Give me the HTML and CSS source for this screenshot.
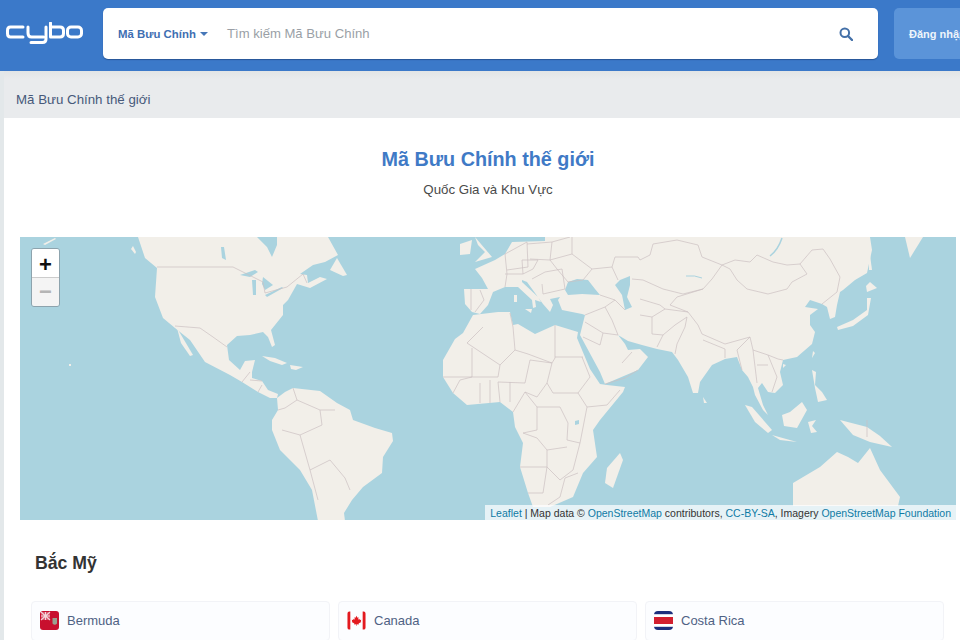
FILE: index.html
```html
<!DOCTYPE html>
<html lang="vi">
<head>
<meta charset="utf-8">
<title>Mã Bưu Chính thế giới</title>
<link rel="stylesheet" href="styles.css">
</head>
<body>
<header class="topbar">
  <a class="logo" href="#" aria-label="cybo">
    <svg width="78" height="24" viewBox="0 0 78 24" fill="none" stroke="#fff" stroke-width="3" stroke-linecap="round" stroke-linejoin="round">
      <path d="M18 5H5.500Q2.500 5 2.500 8.500V11.500Q2.500 15 5.500 15H18"/>
      <path d="M23 5V11Q23 15 26.500 15H38.500M41 5V17Q41 20.500 37.500 20.500H26"/>
      <path d="M45.500 1V15H55Q58.500 15 58.500 11.500V8.500Q58.500 5 55 5H45.500"/>
      <rect x="62.500" y="5" width="14" height="10" rx="3.500"/>
    </svg>
  </a>
  <form class="search">
    <span class="scope">Mã Bưu Chính<i class="caret"></i></span>
    <span class="placeholder">Tìm kiếm Mã Bưu Chính</span>
    <svg class="search-icon" width="14" height="14" viewBox="0 0 14 14" fill="none" stroke="#4470a8" stroke-width="2">
      <circle cx="5.800" cy="5.800" r="4.300"/>
      <path d="M9 9l4 4" stroke-width="2.400" stroke-linecap="round"/>
    </svg>
  </form>
  <a class="login" href="#">Đăng nhập</a>
</header>

<main class="page">
  <nav class="crumb">Mã Bưu Chính thế giới</nav>
  <div class="content">
    <h1 class="title">Mã Bưu Chính thế giới</h1>
    <p class="subtitle">Quốc Gia và Khu Vực</p>

    <section class="map">
      <svg class="map-art" viewBox="20 237 936 283" preserveAspectRatio="none" aria-hidden="true">
        <g fill="#f2efe9">
          <path d="M138 237L145 258L157 268L155 297L163 318L175 328L190 340L205 362L230 375L242 382L258 392L270 398L277 398L278 394L268 390L262 381L252 378L252 372L255 360L245 361L240 370L229 360L227 345L237 336L250 335L263 332L268 337L272 347L275 345L271 330L283 315L283 305L288 300L297 284L310 288L327 279L320 277L308 283L307 275L300 274L313 265L325 262L338 255L328 237Z"/>
          <path d="M337 258L347 275L343 276L330 270Z"/>
          <path d="M133 246L136 252L135 254L131 249Z"/>
          <path d="M177 328L193 355L190 356L181 343Z"/>
          <path d="M262 356L275 358L287 363L282 365L270 361Z"/>
          <path d="M290 365L303 367L296 370L291 369Z"/>
          <path d="M69 364L71 364L71 366L69 366Z"/>
          <path d="M43 244L55 238L56 239L45 245Z"/>
          <path d="M277 398L285 392L293 388L320 391L337 403L350 410L353 420L375 428L392 433L393 441L383 457L382 473L363 487L352 500L344 513L345 521L318 521L312 490L300 470L280 450L272 430L272 420L278 410Z"/>
          <path d="M473 315L498 312L510 312L513 325L518 324L535 334L555 325L578 332L577 338L590 369L600 384L607 385L625 387L623 392L600 420L593 430L597 457L583 473L573 497L550 507L533 507L528 493L520 467L523 443L515 427L513 412L500 402L467 405L453 393L443 377L443 360L455 339L463 333Z"/>
          <path d="M620 453L623 460L613 488L605 483L607 468Z"/>
          <path d="M512 242L545 241L545 237L870 237L872 250L867 273L855 280L843 290L840 292L837 305L835 317L830 319L827 307L822 304L810 300L805 307L818 309L810 315L810 325L815 332L812 344L797 357L783 360L780 372L783 385L775 393L768 392L762 383L758 388L763 405L768 415L763 410L755 395L753 387L748 377L742 370L737 357L725 359L712 365L700 382L698 393L693 393L688 377L678 360L672 352L657 349L642 345L628 341L618 335L625 344L628 350L640 349L648 357L638 370L605 384L600 372L580 335L585 315L582 314L562 310L558 300L560 297L550 299L553 305L550 312L543 304L527 282L522 280L522 282L538 297L541 302L535 300L536 307L533 308L532 300L518 287L513 287L505 287L493 292L488 305L480 314L472 312L465 304L464 289L488 289L482 278L475 269L495 260L505 254Z"/>
          <path d="M475 237L492 257L475 262L485 252L478 245Z"/>
          <path d="M460 244L472 240L470 254L460 255Z"/>
          <path d="M514 295L517 295L517 302L514 302Z"/>
          <path d="M525 309L532 309L531 313Z"/>
          <path d="M905 237L923 237L910 258Z"/>
          <path d="M837 327L853 320L867 310L867 298L871 298L868 315L853 326L838 330Z"/>
          <path d="M867 292L877 288L870 282L866 286Z"/>
          <path d="M869 247L872 270L869 270Z"/>
          <path d="M703 397L707 403L704 403Z"/>
          <path d="M745 405L752 407L772 430L768 433L755 422Z"/>
          <path d="M772 435L797 442L780 440Z"/>
          <path d="M782 415L790 412L802 402L807 410L797 428L784 426Z"/>
          <path d="M808 422L816 420L812 426L817 432L811 433Z"/>
          <path d="M812 370L816 372L815 385L822 392L827 400L818 402L815 388Z"/>
          <path d="M813 351L815 353L812 358Z"/>
          <path d="M783 364L786 365L783 368Z"/>
          <path d="M840 420L867 427L880 436L892 447L870 442L853 435Z"/>
          <path d="M793 483L820 467L837 452L848 457L858 463L870 448L880 470L900 497L898 506L793 506Z"/>
        </g>
        <g fill="#aad3df">
          <path d="M257 237L277 237L277 245L272 257L267 247Z"/>
          <path d="M240 275L255 270L258 272L250 277Z"/>
          <path d="M252 280L256 280L256 295L253 295Z"/>
          <path d="M263 277L273 285L265 290L262 284Z"/>
          <path d="M265 295L282 287L283 288L267 297Z"/>
          <path d="M221 247L224 247L226 260L222 258Z"/>
          <path d="M565 290L568 282L577 279L588 280L595 289L600 295L582 294L568 295Z"/>
          <path d="M620 280L630 276L630 285L627 297L632 307L625 310L622 295L615 285Z"/>
          <path d="M575 421L579 420L579 424L575 425Z"/>
        </g>
        <g fill="none" stroke="#aad3df">
          <path d="M782 238Q778 250 770 256" stroke-width="1.500"/>
          <path d="M686 276Q695 275 702 278" stroke-width="1"/>
        </g>
        <g fill="none" stroke="#cbc0c2" stroke-width=".7">
          <path d="M157 267H233L263 282L265 293L287 287L303 274M303 274L307 283"/>
          <path d="M175 326L200 328L213 337L227 347"/>
          <path d="M242 382L250 372M250 380L262 381M258 392L262 385"/>
          <path d="M293 388L297 400L285 408L278 410M297 400L320 410L335 410M320 410L322 425L300 435L282 430M300 435L310 470L330 460L345 478L350 490M310 470L318 500"/>
          <path d="M483 327L467 343L500 365L515 350L513 327L510 313M515 350L528 354L552 363L555 358V325M555 357H583"/>
          <path d="M472 348V377H443M472 377H498L500 365M530 360L525 383L498 382M530 360L552 363L547 383L537 397L525 392M547 383L553 393H578L590 377L582 357"/>
          <path d="M578 393L587 407L607 405L620 390M537 407H560L568 423L567 440L580 443L587 407M523 433L537 438L547 450L567 447M520 467H547V450M547 467L543 493L528 493M547 467L560 480L573 470L580 443M578 473L565 478L560 497L548 505"/>
          <path d="M480 383V403M490 380V403M510 382V402M498 382L500 402M453 393L460 380L472 377M513 412L525 392M525 392L537 407V430L523 433"/>
          <path d="M471 289V310M480 290L484 300L475 312M505 254L507 274L505 287M505 254L527 242L528 267L507 270M527 244L552 242L550 260L530 259M550 260L572 254L592 269L583 280L568 282L557 269L550 260M505 274H523L522 260L538 260L533 269L523 274M532 279L545 272L562 269L565 289L543 294L542 284M552 242L570 237M572 254V237"/>
          <path d="M592 269L612 267L615 257L638 257L640 260M612 267L618 280M600 295L615 300L625 310M585 315L605 307L615 300M605 307L612 320L618 335M585 322L603 333L618 335M583 337L600 345L603 333M605 384L625 378L638 370M622 363L632 352"/>
          <path d="M640 260L650 255L653 244L677 240L698 245L702 257L722 265L735 260L750 262L757 255L773 262L787 265L800 264L807 274L792 282L787 289L768 294L747 289L737 280L730 269L722 265M800 264L812 250L823 249L830 259L840 277L837 292L822 304M722 265L712 279L703 289L683 294L663 289L643 280L632 279"/>
          <path d="M703 289L677 297L670 305L688 312L698 325L702 334L725 344L750 337L753 350L768 355L778 359L783 360M640 299L660 305L665 309L652 317L652 334L663 335L675 325L687 317L685 327L677 344L675 354M663 335L657 347M665 309L688 312M640 315L652 317M703 340L725 349V358M737 350L750 337M737 350L742 370M753 350L757 383M768 355L777 377L772 392M757 365L768 365"/>
          <path d="M867 420V437"/>
        </g>
      </svg>
      <div class="zoom">
        <span class="zoom-btn">+</span>
        <span class="zoom-btn is-off">−</span>
      </div>
      <div class="attrib"><a href="#">Leaflet</a> | Map data © <a href="#">OpenStreetMap</a> contributors, <a href="#">CC-BY-SA</a>, Imagery <a href="#">OpenStreetMap Foundation</a></div>
    </section>

    <h2 class="region">Bắc Mỹ</h2>
    <div class="grid">
      <a class="card" href="#">
        <svg class="flag" width="19" height="19" viewBox="0 0 19 19">
          <rect width="19" height="19" rx="3" fill="#c8102e"/>
          <rect x="1" y="1" width="9" height="8" fill="#d9536b"/>
          <path d="M1 5H10M5.500 1V9M1 1L10 9M10 1L1 9" stroke="#f3d5da" stroke-width="1.100"/>
          <path d="M12.500 7H17V12.500Q14.750 15 12.500 12.500Z" fill="#9aa08f"/>
        </svg>
        <span>Bermuda</span>
      </a>
      <a class="card" href="#">
        <svg class="flag" width="19" height="19" viewBox="0 0 20 19">
          <path d="M3.500 0H2.500Q.5 0 .5 2V17Q.5 19 2.500 19H3.500ZM16.500 0H17.500Q19.500 0 19.500 2V17Q19.500 19 17.500 19H16.500Z" fill="#e3191f"/>
          <path d="M10 4.500L11 6.500L12.200 6L11.700 8.700L13 7.700L13.600 9L15 8.800L14.500 10.500L15 11L12.200 12.700L12.500 13.800L10.300 13.500V15H9.700V13.500L7.500 13.800L7.800 12.700L5 11L5.500 10.500L5 8.800L6.400 9L7 7.700L8.300 8.700L7.800 6L9 6.500Z" fill="#e3191f"/>
        </svg>
        <span>Canada</span>
      </a>
      <a class="card" href="#">
        <svg class="flag" width="19" height="19" viewBox="0 0 19 19">
          <clipPath id="cr"><rect width="19" height="19" rx="4"/></clipPath>
          <g clip-path="url(#cr)">
            <rect width="19" height="19" fill="#fff"/>
            <rect width="19" height="3.200" fill="#1c2f7d"/>
            <rect y="15.800" width="19" height="3.200" fill="#1c2f7d"/>
            <rect y="6" width="19" height="7" fill="#d21f2f"/>
          </g>
        </svg>
        <span>Costa Rica</span>
      </a>
    </div>
  </div>
</main>
</body>
</html>
```
FILE: styles.css
```css
* { box-sizing: border-box; }
html, body { margin: 0; height: 640px; overflow: hidden; }
body {
  background: #e3e8ea;
  font-family: "Liberation Sans", Arial, sans-serif;
  color: #444;
}
a { text-decoration: none; color: inherit; }

.topbar {
  display: flex;
  align-items: stretch;
  height: 71px;
  padding: 8px 0 12px 0;
  background: #3b79c9;
  overflow: hidden;
}
.logo {
  flex: none;
  display: flex;
  align-items: center;
  width: 103px;
  padding: 0 0 0 5px;
}
.search {
  flex: none;
  display: flex;
  align-items: center;
  width: 775px;
  padding: 0 25px 0 15px;
  background: #fff;
  border-radius: 5px;
  box-shadow: 0 1px 1px rgba(20, 50, 100, .5);
}
.scope {
  display: flex;
  align-items: center;
  width: 109px;
  font-size: 11.400px;
  font-weight: 700;
  color: #3f6fb2;
  white-space: nowrap;
}
.caret {
  width: 0;
  height: 0;
  margin-left: 4px;
  border: 4px solid transparent;
  border-top-color: #4677b8;
  border-bottom: 0;
}
.placeholder {
  flex: 1;
  font-size: 13.100px;
  color: #9a9fa6;
}
.search-icon { flex: none; }
.login {
  flex: none;
  display: flex;
  align-items: center;
  width: 100px;
  margin-left: 16px;
  padding-left: 15px;
  background: #5b94d9;
  border-radius: 5px;
  font-size: 11px;
  font-weight: 700;
  color: #eef4fb;
  white-space: nowrap;
}

.page { margin-left: 4px; background: #fff; height: 569px; overflow: hidden; }
.crumb {
  height: 47px;
  padding: 21px 0 0 12px;
  background: linear-gradient(#e2e5e6, #e9ebed 8px);
  font-size: 13.300px;
  line-height: 16px;
  color: #46597a;
}
.content { padding: 0 4px 0 16px; }
.title {
  margin: 30px 0 0;
  font-size: 19.800px;
  line-height: 23px;
  font-weight: 700;
  text-align: center;
  color: #3f7ac6;
}
.subtitle {
  margin: 11px 0 0;
  font-size: 13.300px;
  line-height: 16px;
  text-align: center;
  color: #4a4a4a;
}

.map {
  position: relative;
  height: 283px;
  margin-top: 39px;
  background: #aad3df;
  overflow: hidden;
}
.map-art {
  display: block;
  width: 100%;
  height: 100%;
  filter: blur(.4px);
}
.zoom {
  position: absolute;
  top: 11px;
  left: 11px;
  display: flex;
  flex-direction: column;
  width: 29px;
  border: 1px solid #8da3ad;
  border-radius: 3px;
  overflow: hidden;
}
.zoom-btn {
  height: 28px;
  background: #fff;
  font-size: 22px;
  font-weight: 700;
  line-height: 31px;
  text-align: center;
  color: #111;
}
.zoom-btn.is-off {
  height: 29px;
  background: #f4f4f4;
  border-top: 1px solid #ccc;
  line-height: 28px;
  color: #b5b5b5;
}
.attrib {
  position: absolute;
  right: 0;
  bottom: 0;
  padding: 1px 5px 0;
  background: rgba(255, 255, 255, .7);
  font-size: 10.500px;
  line-height: 14px;
  color: #333;
  white-space: nowrap;
}
.attrib a { color: #0f7ba5; }

.region {
  margin: 33px 0 0 15px;
  font-size: 17.700px;
  line-height: 21px;
  font-weight: 700;
  color: #333;
}
.grid {
  display: grid;
  grid-template-columns: repeat(3, 299px);
  gap: 8px;
  margin: 27px 0 0 11px;
}
.card {
  display: flex;
  align-items: center;
  gap: 8px;
  height: 40px;
  padding: 0 8px 2px;
  background: #fcfdff;
  border: 1px solid #f2f3f7;
  border-radius: 4px;
  font-size: 13px;
  color: #4f6284;
}
.flag { flex: none; }
```
